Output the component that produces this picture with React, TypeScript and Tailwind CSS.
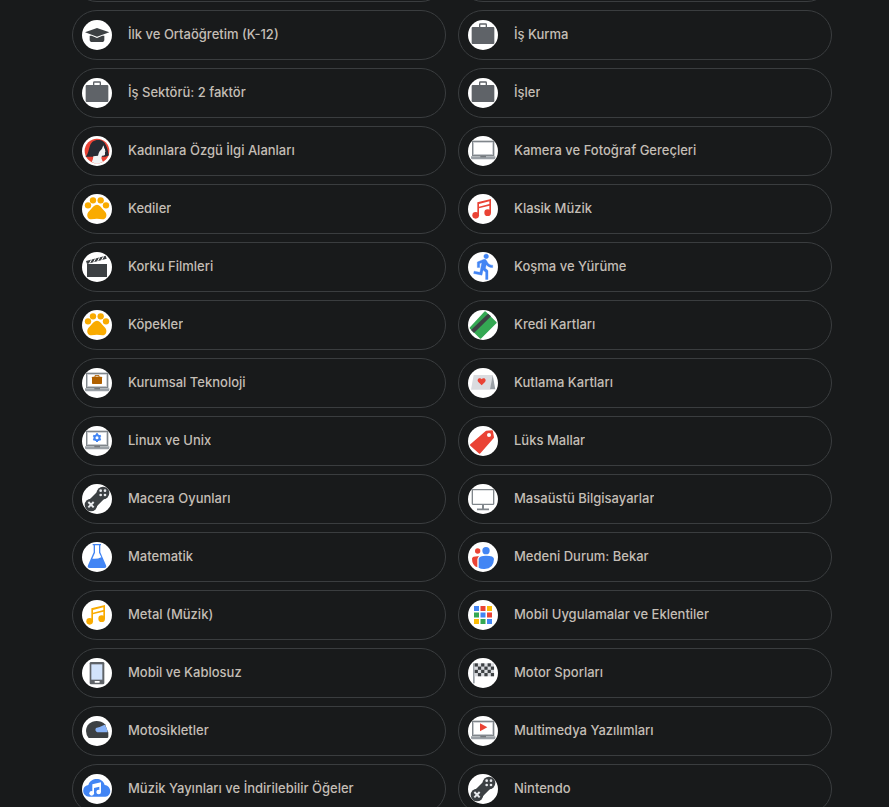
import React from "react";

const RED = "#ea4335";
const BLUE = "#4285f4";
const GREEN = "#34a853";
const YELLOW = "#fbbc04";
const DARK = "#3c4043";

const Cap = () => (
  <g fill={DARK}>
    <path d="M9 37 45 24 82 37 45 50Z" />
    <path d="M23 47h6l16 7 16-7h6v12q0 7-8 7H31q-8 0-8-7Z" />
  </g>
);

const Briefcase = () => (
  <g>
    <rect x="35" y="12" width="20" height="12" rx="2" fill="none" stroke="#5f6368" strokeWidth="4" />
    <rect x="11" y="21" width="68" height="51" rx="3" fill="#5f6368" />
  </g>
);

const Woman = () => (
  <g>
    <circle cx="45" cy="45" r="37" fill={RED} />
    <path d="M10 62C18 56 19 44 23 32C27 18 36 12 48 12C61 12 68 18 72 28C76 36 79 47 80 58L70 62H32Z" fill="#272b33" />
    <path d="M64 28C67 34 69 40 71 46L69 49L69 56Q66 60 60 59L58 66Q60 73 63 78Q46 86 29 79Q34 70 34 61L48 59Q50 50 53 46Q61 40 64 28Z" fill="#f1f3f4" />
    <path d="M64 26Q74 36 80 58L74 61L71 46Z" fill="#272b33" />
  </g>
);

function Laptop({children}: {children?: React.ReactNode}) {
  return (
    <g>
      <rect x="14" y="16" width="63" height="42" fill="#fff" stroke="#80868b" strokeWidth="4" />
      <rect x="17" y="19" width="57" height="36" fill="none" stroke="#bdc1c6" strokeWidth="2" />
      <path d="M9 61h73v5q0 4-4 4H13q-4 0-4-4Z" fill="#9aa0a6" />
      <path d="M37 61h17v3H37Z" fill="#5f6368" />
      {children}
    </g>
  );
}

const Paw = () => (
  <g fill="#f9ab00">
    <circle cx="18" cy="34" r="9.5" />
    <circle cx="33" cy="19" r="9.5" />
    <circle cx="56" cy="19" r="9.5" />
    <circle cx="72" cy="34" r="9.5" />
    <path d="M45 32C53 32 57 39 61 44L70 54C77 64 72 76 61 76Q45 73 28 76C17 76 12 64 19 54L28 44C32 39 37 32 45 32Z" />
  </g>
);

const Clapper = () => (
  <g>
    <rect x="15" y="36" width="60" height="39" fill={DARK} />
    <path d="M12 27 71 11 74 20 15 36Z" fill={DARK} />
    <path d="m22 35 7-13M34 32l7-13M46 29l7-13M58 26l7-13" stroke="#fff" strokeWidth="3" />
  </g>
);

const Notes = ({color}: {color: string}) => (
  <g fill={color}>
    <circle cx="23" cy="64" r="10" />
    <circle cx="59" cy="56" r="10" />
    <path d="M28 25 69 15V56H64V35L33 43V64H28ZM33 30V38L64 30V22Z" fillRule="evenodd" />
  </g>
);

const Runner = () => (
  <path
    transform="translate(6.7 .7) scale(3.55)"
    fill={BLUE}
    stroke={BLUE}
    strokeWidth=".3"
    d="M13.49 5.48c1.1 0 2-.9 2-2s-.9-2-2-2-2 .9-2 2 .9 2 2 2zm-3.6 13.9l1-4.4 2.1 2v6h2v-7.5l-2.1-2 .6-3c1.3 1.5 3.3 2.5 5.5 2.5v-2c-1.9 0-3.5-1-4.3-2.4l-1-1.6c-.4-.6-1-1-1.7-1-.3 0-.5.1-.8.1l-5.2 2.2v4.7h2v-3.4l1.8-.7-1.6 8.1-4.9-1-.4 2 7 1.4z"
  />
);

const CreditCard = () => (
  <g>
    <path d="M8 54 51 7 83 38 38 83Z" fill={GREEN} stroke={GREEN} strokeWidth="6" strokeLinejoin="round" />
    <path d="M9 60 60 11 69 19 18 69Z" fill={DARK} />
  </g>
);

const GreetingCard = () => (
  <g>
    <path d="M17 21H74L67 65H9Z" fill="#dadce0" />
    <path d="M74 21 82 64H66Z" fill="#9aa0a6" />
    <path d="M41 52 31 42C26 36 31 30 36 31Q39 31 41 34Q43 31 46 31C51 30 56 36 51 42Z" fill={RED} />
  </g>
);

const Gear = () => (
  <g fill="none" stroke={BLUE}>
    <circle cx="45" cy="35" r="7.5" strokeWidth="6" />
    <path d="M45 22v5M45 43v5M33.7 28.5l4.4 2.5M51.9 39l4.4 2.5M33.7 41.5l4.4-2.5M51.9 31l4.4-2.5" strokeWidth="6" />
  </g>
);

const Tag = () => (
  <g>
    <path d="M9 57 55 17 72 16 75 34 35 80Z" fill={RED} stroke={RED} strokeWidth="6" strokeLinejoin="round" />
    <circle cx="63" cy="27" r="6" fill="#fff" />
  </g>
);

const Gamepad = () => (
  <g>
    <path d="M27 63 64 26" stroke={DARK} strokeWidth="30" />
    <circle cx="27" cy="63" r="19" fill={DARK} />
    <circle cx="63" cy="27" r="19" fill={DARK} />
    <path d="m19 54 16 16M35 54 19 70" stroke="#e8eaed" strokeWidth="6" />
    <g fill="#e8eaed">
      <circle cx="56" cy="20" r="4" />
      <circle cx="69" cy="20" r="4" />
      <circle cx="56" cy="33" r="4" />
      <circle cx="69" cy="33" r="4" />
    </g>
  </g>
);

const Monitor = () => (
  <g fill="none" stroke="#80868b" strokeWidth="4">
    <rect x="13" y="17" width="64" height="44" rx="2" />
    <path d="M45 61v14" strokeWidth="6" />
    <path d="M27 76h36" strokeWidth="5" />
  </g>
);

const Flask = () => (
  <g fill={BLUE}>
    <path d="M32 6H57V10H55V31L72 70Q75 78 67 78H23Q15 78 18 70L35 31V10H32ZM39 10V32L31 50Q45 52 58 46L51 32V10Z" fillRule="evenodd" />
  </g>
);

const People = () => (
  <g>
    <circle cx="29" cy="27" r="8" fill={RED} />
    <path d="M12 50Q13 43 29 43H34Q27 47 28 58V76Q12 70 12 50Z" fill={RED} />
    <circle cx="54" cy="26" r="11" fill={BLUE} />
    <path d="M32 50Q34 41 54 41Q78 41 78 51Q77 80 50 81Q40 82 32 77Z" fill={BLUE} />
  </g>
);

const APP_COLORS = [BLUE, RED, YELLOW, GREEN, BLUE, RED, YELLOW, GREEN, BLUE];

const Apps = () => (
  <g>
    {APP_COLORS.map((color, i) => (
      <rect key={i} x={18 + (i % 3) * 19.5} y={18 + Math.floor(i / 3) * 19.5} width="15" height="15" fill={color} />
    ))}
  </g>
);

const Phone = () => (
  <g>
    <rect x="23" y="12" width="44" height="67" rx="4" fill="#5f6368" />
    <rect x="28" y="19" width="33" height="46" fill="#d2e3fc" />
    <rect x="38" y="69" width="15" height="5" rx="1" fill="#fff" />
  </g>
);

const Flag = () => (
  <g>
    <rect x="15" y="16" width="5" height="60" fill="#9aa0a6" />
    <rect x="20" y="16" width="58" height="39" fill="#dadce0" />
    {Array.from({length: 24}, (_, i) => i)
      .filter((i) => ((i % 6) + Math.floor(i / 6)) % 2 === 0)
      .map((i) => (
        <rect key={i} x={20 + (i % 6) * 9.7} y={16 + Math.floor(i / 6) * 9.7} width="9.7" height="9.7" fill={DARK} />
      ))}
  </g>
);

const Helmet = () => (
  <g>
    <path d="M44 15Q58 15 69 25L79 50V62Q79 66 75 66H20Q12 56 12 45C12 28 26 15 44 15Z" fill={DARK} />
    <path d="M42 36Q54 33 68 26Q76 35 77 49H46Q37 44 42 36Z" fill="#8ab4f8" />
  </g>
);

const CloudMusic = () => (
  <g>
    <path d="M22 68C-1 68-3 36 19 33C27 10 61 9 68 33C91 37 89 67 70 68Z" fill={BLUE} />
    <g fill="#fff">
      <circle cx="29" cy="58" r="7" />
      <circle cx="50" cy="54" r="7" />
      <path d="M31 31 57 25V54H52V38L36 42V58H31Z" />
    </g>
  </g>
);

const topics = [
  {name: "İlk ve Ortaöğretim (K-12)", icon: <Cap />},
  {name: "İş Kurma", icon: <Briefcase />},
  {name: "İş Sektörü: 2 faktör", icon: <Briefcase />},
  {name: "İşler", icon: <Briefcase />},
  {name: "Kadınlara Özgü İlgi Alanları", icon: <Woman />},
  {name: "Kamera ve Fotoğraf Gereçleri", icon: <Laptop />},
  {name: "Kediler", icon: <Paw />},
  {name: "Klasik Müzik", icon: <Notes color={RED} />},
  {name: "Korku Filmleri", icon: <Clapper />},
  {name: "Koşma ve Yürüme", icon: <Runner />},
  {name: "Köpekler", icon: <Paw />},
  {name: "Kredi Kartları", icon: <CreditCard />},
  {
    name: "Kurumsal Teknoloji",
    icon: (
      <Laptop>
        <rect x="30" y="26" width="30" height="22" rx="2" fill="#b06000" />
        <path d="M39 27v-4h12v4" fill="none" stroke="#b06000" strokeWidth="3" />
      </Laptop>
    ),
  },
  {name: "Kutlama Kartları", icon: <GreetingCard />},
  {name: "Linux ve Unix", icon: <Laptop><Gear /></Laptop>},
  {name: "Lüks Mallar", icon: <Tag />},
  {name: "Macera Oyunları", icon: <Gamepad />},
  {name: "Masaüstü Bilgisayarlar", icon: <Monitor />},
  {name: "Matematik", icon: <Flask />},
  {name: "Medeni Durum: Bekar", icon: <People />},
  {name: "Metal (Müzik)", icon: <Notes color="#f9ab00" />},
  {name: "Mobil Uygulamalar ve Eklentiler", icon: <Apps />},
  {name: "Mobil ve Kablosuz", icon: <Phone />},
  {name: "Motor Sporları", icon: <Flag />},
  {name: "Motosikletler", icon: <Helmet />},
  {name: "Multimedya Yazılımları", icon: <Laptop><path d="M36 22 58 34 36 46Z" fill={RED} /></Laptop>},
  {name: "Müzik Yayınları ve İndirilebilir Öğeler", icon: <CloudMusic />},
  {name: "Nintendo", icon: <Gamepad />},
];

function TopicButton({name, icon}: {name: string; icon: React.ReactNode}) {
  return (
    <button
      type="button"
      className="flex h-[50px] w-full items-center gap-4 rounded-full border border-[#3a3d3f] px-[9px] text-left text-[13px] leading-5 font-medium text-[#c4beb6]"
    >
      <svg viewBox="0 0 90 90" className="size-[30px] shrink-0 rounded-full bg-white" aria-hidden="true">
        {icon}
      </svg>
      <span className="truncate pb-0.5">{name}</span>
    </button>
  );
}

export default function App() {
  return (
    <main className="h-screen overflow-hidden bg-[#181a1b] pr-[57px] pl-[72px] font-['Inter',sans-serif]">
      {/* the list is scrolled, only the bottom edge of the row above shows */}
      <div className="-mt-12 grid grid-cols-2 gap-x-3" aria-hidden="true">
        <div className="h-[50px] rounded-full border border-[#3a3d3f]" />
        <div className="h-[50px] rounded-full border border-[#3a3d3f]" />
      </div>
      <ul className="mt-2 grid grid-cols-2 gap-x-3 gap-y-2">
        {topics.map((topic) => (
          <li key={topic.name}>
            <TopicButton name={topic.name} icon={topic.icon} />
          </li>
        ))}
      </ul>
    </main>
  );
}
